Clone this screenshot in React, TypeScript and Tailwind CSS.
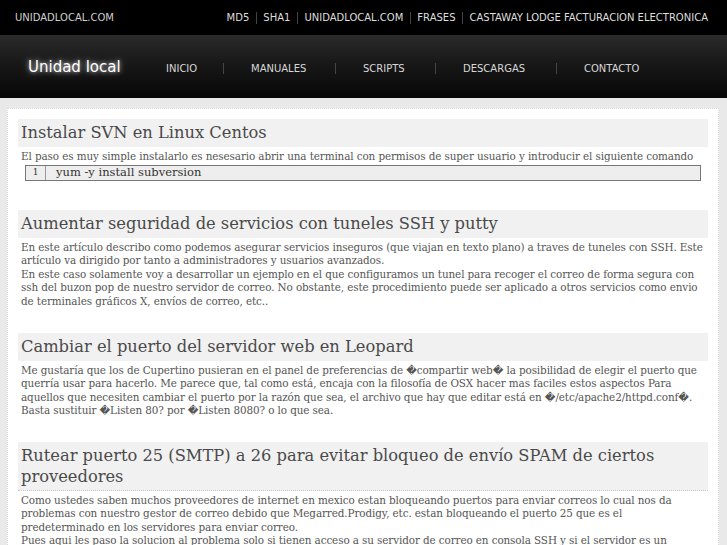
const topLinks = ["MD5", "SHA1", "UNIDADLOCAL.COM", "FRASES", "CASTAWAY LODGE FACTURACION ELECTRONICA"]

const navItems = [
  { label: "INICIO", w: "w-[57px]" },
  { label: "MANUALES", w: "w-[84px]" },
  { label: "SCRIPTS", w: "w-[72px]" },
  { label: "DESCARGAS", w: "w-[93px]" },
  { label: "CONTACTO", w: "w-[90px]" },
]

function Heading({ children, underline = false }: { children: React.ReactNode; underline?: boolean }) {
  return (
    <h2
      className={`bg-[#f1f1f1] px-[3px] py-[3px] text-[16.3px] leading-[21.5px] text-[#4a4a4a] ${
        underline ? "border-b border-dotted border-[#c8c8c8] pb-[2px]" : ""
      }`}
    >
      {children}
    </h2>
  )
}

function Para({ children }: { children: React.ReactNode }) {
  return <p className="mt-[3px] px-[3px] text-[10.4px] leading-[13.5px] tracking-[-0.1px] text-[#555]">{children}</p>
}

export default function App() {
  return (
    <div className="min-h-[545px] bg-[#e9e9e9] font-['DejaVu_Sans',sans-serif]">
      {/* barra superior */}
      <div className="flex h-[35px] items-center justify-between bg-black pl-[15px] pr-[19px] text-[10px] text-[#cfcfcf]">
        <span>UNIDADLOCAL.COM</span>
        <div className="flex items-center text-[#dedede]">
          {topLinks.map((l, i) => (
            <span key={l} className="flex items-center">
              {i > 0 && <span className="mx-[6.5px] h-[12px] w-px bg-[#444]" />}
              {l}
            </span>
          ))}
        </div>
      </div>

      {/* menu */}
      <div className="flex h-[63px] items-center bg-gradient-to-b from-[#2b2b2b] via-[#161616] to-[#080808] pl-[28px] pt-[4px]">
        <span className="-mt-[3px] w-[138px] text-[15px] text-white [text-shadow:0_0_4px_rgba(255,255,255,0.8),0_0_12px_rgba(255,255,255,0.4)]">
          Unidad local
        </span>
        {navItems.map((n, i) => (
          <div key={n.label} className="flex items-center">
            <span className={`text-[10px] text-[#d8d8d8] ${n.w}`}>{n.label}</span>
            {i < navItems.length - 1 && (
              <>
                <span className="h-[11px] w-px bg-[#444]" />
                <span className="w-[27px]" />
              </>
            )}
          </div>
        ))}
      </div>

      {/* contenido */}
      <div className="pl-[7px] pr-[8px] pt-[10px]">
        <div className="border border-dotted border-[#d9d9d9] bg-white px-[10px] pt-[10px] pb-[20px] font-['DejaVu_Serif',serif]">
          <Heading>Instalar SVN en Linux Centos</Heading>
          <Para>
            El paso es muy simple instalarlo es nesesario abrir una terminal con permisos de super usuario y introducir el
            siguiente comando
          </Para>
          <div className="mx-[7px] mt-[2px] flex h-[16px] items-center border border-[#777] bg-[#eee] text-[11.5px] text-[#333]">
            <span className="flex h-full w-[20px] items-center justify-center border-r border-[#999] text-[9px]">1</span>
            <span className="pl-[10px]">yum -y install subversion</span>
          </div>

          <div className="mt-[29px]">
            <Heading>Aumentar seguridad de servicios con tuneles SSH y putty</Heading>
            <Para>
              En este artículo describo como podemos asegurar servicios inseguros (que viajan en texto plano) a traves de
              tuneles con SSH. Este artículo va dirigido por tanto a administradores y usuarios avanzados.
              <br />
              En este caso solamente voy a desarrollar un ejemplo en el que configuramos un tunel para recoger el correo de
              forma segura con ssh del buzon pop de nuestro servidor de correo. No obstante, este procedimiento puede ser
              aplicado a otros servicios como envio de terminales gráficos X, envíos de correo, etc..
            </Para>
          </div>

          <div className="mt-[25px]">
            <Heading>Cambiar el puerto del servidor web en Leopard</Heading>
            <Para>
              Me gustaría que los de Cupertino pusieran en el panel de preferencias de �compartir web� la posibilidad de
              elegir el puerto que querría usar para hacerlo. Me parece que, tal como está, encaja con la filosofía de OSX
              hacer mas faciles estos aspectos Para aquellos que necesiten cambiar el puerto por la razón que sea, el archivo
              que hay que editar está en �/etc/apache2/httpd.conf�. Basta sustituir �Listen 80? por �Listen 8080? o lo que
              sea.
            </Para>
          </div>

          <div className="mt-[24px]">
            <Heading underline>Rutear puerto 25 (SMTP) a 26 para evitar bloqueo de envío SPAM de ciertos proveedores</Heading>
            <Para>
              Como ustedes saben muchos proveedores de internet en mexico estan bloqueando puertos para enviar correos lo cual
              nos da problemas con nuestro gestor de correo debido que Megarred.Prodigy, etc. estan bloqueando el puerto 25
              que es el predeterminado en los servidores para enviar correo.
              <br />
              Pues aqui les paso la solucion al problema solo si tienen acceso a su servidor de correo en consola SSH y si el
              servidor es un
            </Para>
          </div>
        </div>
      </div>
    </div>
  )
}
